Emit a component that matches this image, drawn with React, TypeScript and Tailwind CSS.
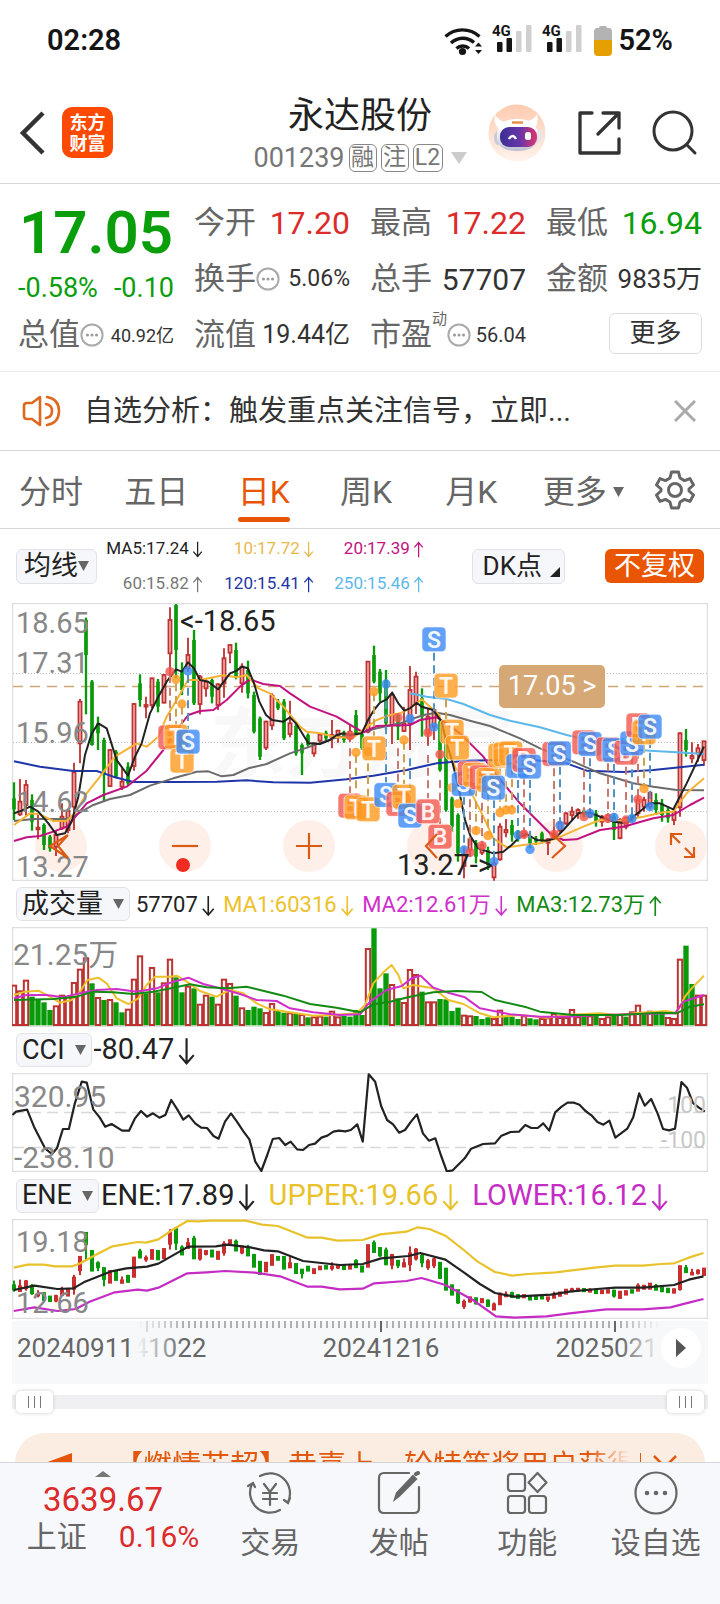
import React from "react";

type Candle = [dir: 0 | 1, high: number, top: number, bottom: number, low: number];

// 1 = rising, 0 = falling; values are chart units, three per pixel
const candles: Candle[] = [
  [0, 547, 595, 628, 660], [1, 537, 605, 643, 648], [1, 540, 555, 615, 650], [0, 583, 600, 665, 692], [1, 645, 683, 688, 718],
  [0, 670, 675, 735, 750], [0, 705, 710, 745, 755], [1, 690, 705, 740, 768], [1, 610, 650, 685, 690], [1, 625, 632, 690, 700],
  [1, 488, 517, 620, 690], [1, 297, 305, 430, 490], [0, 53, 60, 165, 343], [0, 240, 245, 435, 437], [0, 350, 370, 400, 450],
  [0, 413, 420, 520, 605], [1, 447, 450, 558, 560], [0, 450, 455, 530, 535], [1, 505, 545, 560, 570], [0, 487, 500, 550, 555],
  [1, 310, 312, 498, 512], [0, 223, 250, 300, 320], [1, 290, 315, 320, 355], [1, 233, 235, 315, 325], [0, 237, 245, 320, 337],
  [1, 222, 225, 308, 310], [1, 22, 60, 160, 230], [0, 12, 15, 150, 235], [0, 187, 210, 270, 285], [1, 113, 165, 205, 215],
  [0, 90, 120, 310, 315], [1, 225, 230, 312, 343], [1, 235, 245, 265, 290], [0, 235, 240, 290, 310], [1, 250, 253, 315, 330],
  [1, 145, 175, 250, 293], [1, 133, 135, 158, 190], [0, 128, 150, 230, 238], [1, 190, 200, 250, 278], [0, 182, 210, 280, 295],
  [0, 275, 285, 395, 400], [0, 350, 355, 470, 480], [1, 362, 365, 443, 450], [1, 280, 287, 376, 390], [0, 297, 305, 325, 330],
  [0, 297, 305, 415, 420], [1, 302, 370, 402, 412], [0, 370, 378, 460, 467], [0, 430, 435, 460, 525], [0, 400, 405, 435, 440],
  [1, 428, 430, 460, 470], [1, 400, 404, 422, 430], [0, 392, 398, 415, 425], [1, 360, 405, 410, 445], [1, 390, 392, 405, 428],
  [0, 392, 398, 420, 428], [1, 375, 395, 415, 425], [0, 330, 345, 400, 408], [0, 400, 402, 445, 450], [1, 183, 185, 395, 400],
  [0, 137, 165, 245, 250], [0, 207, 215, 280, 305], [0, 210, 240, 370, 390], [1, 275, 285, 375, 432], [0, 340, 345, 380, 420],
  [1, 320, 370, 393, 396], [1, 198, 270, 370, 450], [1, 215, 230, 310, 342], [0, 265, 295, 350, 410], [1, 325, 350, 400, 437],
  [1, 315, 330, 380, 420], [0, 360, 365, 510, 515], [0, 420, 425, 630, 635], [0, 590, 595, 680, 695], [0, 640, 645, 760, 785],
  [1, 740, 765, 798, 835], [1, 712, 718, 750, 770], [0, 720, 728, 770, 790], [1, 730, 735, 758, 765], [0, 740, 750, 795, 810],
  [1, 770, 790, 832, 842], [1, 670, 680, 778, 782], [1, 657, 690, 697, 712], [0, 660, 675, 705, 725], [0, 690, 695, 715, 725],
  [1, 690, 695, 708, 715], [0, 703, 710, 730, 745], [0, 708, 715, 725, 735], [0, 695, 700, 720, 730], [1, 715, 718, 728, 765],
  [1, 660, 700, 712, 718], [1, 665, 668, 692, 695], [1, 637, 640, 670, 674], [1, 620, 635, 645, 660], [1, 625, 630, 640, 656],
  [0, 625, 632, 645, 652], [1, 625, 640, 650, 655], [0, 630, 640, 665, 680], [1, 645, 650, 665, 680], [1, 640, 645, 660, 668],
  [0, 640, 650, 690, 720], [1, 655, 660, 714, 718], [1, 650, 655, 680, 688], [0, 640, 645, 660, 665], [1, 575, 600, 640, 650],
  [1, 590, 600, 620, 635], [1, 575, 578, 620, 628], [0, 580, 600, 630, 645], [0, 597, 610, 645, 665], [0, 622, 630, 655, 668],
  [1, 630, 635, 660, 675], [1, 397, 400, 622, 650], [0, 387, 420, 450, 470], [1, 427, 468, 475, 490], [1, 432, 445, 460, 485],
  [1, 422, 424, 480, 497],
];

const volumeTops = [
  300, 317, 285, 335, 343, 352, 375, 362, 330, 335, 292, 252, 218, 295, 337, 345, 343, 352, 382, 372, 282, 212, 325, 247, 322, 293,
  222, 277, 322, 303, 310, 357, 330, 335, 357, 282, 295, 332, 368, 375, 365, 370, 382, 355, 378, 383, 383, 385, 388, 397, 395, 393,
  395, 378, 395, 393, 395, 375, 390, 190, 130, 310, 265, 298, 340, 352, 253, 268, 320, 350, 350, 342, 343, 378, 368, 390, 392, 393,
  402, 397, 400, 375, 395, 395, 402, 392, 400, 403, 400, 398, 385, 397, 397, 373, 395, 388, 392, 390, 400, 395, 393, 388, 395, 380,
  360, 385, 378, 385, 385, 397, 400, 222, 182, 297, 330, 330,
];
const volumeDown = new Set([
  3, 4, 5, 6, 13, 15, 17, 18, 22, 24, 27, 28, 30, 33, 37, 39, 40, 41, 44, 45, 47, 49, 52, 55, 56, 57, 58, 60, 61, 62, 64, 68, 71, 72,
  73, 74, 77, 78, 79, 82, 83, 84, 86, 87, 95, 97, 100, 102, 105, 107, 108, 112, 113,
]);

const averages = [
  { color: "#1f35a8", points: "42,484 120,500 220,513 290,513 340,530 400,546 520,546 650,545 740,541 820,547 930,548 1040,538 1120,527 1220,510 1310,490 1400,482 1500,480 1600,480 1700,490 1760,512 1870,516 1960,510 2040,502 2112,494" },
  { color: "#5cb8ec", points: "1230,280 1280,290 1340,297 1390,312 1470,345 1530,362 1620,382 1700,405 1760,420 1850,445 1950,452 2030,457 2112,462" },
  { color: "#6b6b6b", points: "42,663 100,657 200,657 235,640 280,615 330,597 390,585 450,557 520,535 590,515 625,514 665,529 700,525 745,505 800,492 870,460 930,440 1000,415 1060,405 1130,385 1200,370 1270,345 1310,338 1350,345 1410,362 1470,378 1560,415 1620,445 1720,485 1800,520 1900,550 1960,560 2030,570 2112,571" },
  { color: "#c1127f", points: "42,723 80,712 120,708 160,695 200,680 235,640 260,610 310,585 380,560 440,512 490,450 530,390 565,345 600,333 640,330 680,300 720,260 750,238 790,252 840,258 870,280 930,320 1010,350 1060,380 1090,397 1130,378 1230,375 1260,360 1310,352 1340,370 1380,400 1420,440 1450,470 1470,500 1510,550 1560,610 1610,660 1650,700 1690,720 1730,718 1800,690 1870,680 1960,655 2020,645 2070,615 2112,593" },
  { color: "#f5b335", points: "42,675 90,640 120,643 160,663 200,662 225,640 260,580 300,530 345,470 410,430 440,440 475,410 500,350 530,300 564,240 600,240 670,226 710,232 740,225 775,265 810,280 850,320 900,380 920,395 960,400 1010,412 1060,413 1095,385 1130,360 1170,345 1200,340 1230,325 1265,298 1290,320 1318,345 1340,430 1365,500 1390,540 1420,590 1450,650 1480,715 1520,742 1570,735 1620,730 1670,715 1750,680 1800,660 1860,662 1930,650 1990,637 2020,635 2060,580 2112,535" },
  { color: "#222222", points: "42,640 65,632 90,620 115,635 145,670 170,705 195,700 215,665 235,590 255,465 275,400 295,370 320,385 350,480 384,527 405,470 425,430 450,340 475,290 500,245 528,208 546,215 564,187 582,205 600,240 625,245 654,268 690,220 710,212 726,200 744,205 762,250 778,305 798,345 816,360 850,365 870,352 888,370 925,430 960,432 990,420 1010,405 1030,400 1050,405 1085,400 1104,360 1122,330 1140,308 1160,298 1177,278 1195,310 1213,332 1230,325 1250,308 1265,320 1300,330 1325,365 1340,430 1358,490 1375,560 1395,660 1412,710 1435,745 1480,760 1510,755 1535,735 1560,710 1580,702 1610,720 1640,722 1665,715 1690,690 1735,640 1770,638 1800,650 1840,665 1880,670 1900,650 1950,610 1980,610 2020,628 2060,550 2112,440" },
];

const volumeAverages = [
  { color: "#ecc12c", points: "42,330 75,320 115,317 150,335 180,353 215,345 240,320 262,285 295,278 320,295 350,340 385,357 415,340 440,300 465,275 510,275 530,272 560,290 600,318 650,335 690,315 730,325 770,355 810,373 880,383 940,392 1000,390 1070,385 1095,360 1120,295 1150,262 1175,240 1195,270 1210,310 1240,300 1300,310 1345,345 1390,357 1440,385 1480,397 1560,390 1640,398 1700,390 1800,385 1850,390 1920,383 2000,378 2030,385 2055,335 2075,310 2112,272" },
  { color: "#cf30cc", points: "42,340 80,330 140,330 190,337 240,325 290,315 350,312 410,320 470,310 520,290 565,278 610,297 660,310 720,327 770,345 830,348 870,370 940,382 1020,390 1080,388 1110,350 1160,315 1205,303 1235,280 1262,272 1300,308 1350,325 1395,337 1440,370 1530,388 1620,395 1700,395 1800,390 1920,387 2025,385 2050,350 2080,340 2112,330" },
  { color: "#138a13", points: "42,345 160,342 230,335 280,320 340,322 400,327 460,320 520,308 570,298 620,307 680,310 740,305 780,315 850,332 930,357 1010,368 1080,382 1120,358 1170,350 1230,335 1300,322 1370,318 1445,321 1485,345 1580,367 1620,380 1720,390 1860,390 1980,383 2030,385 2070,365 2112,358" },
];

const cciPoints =
  "27,255 35,245 59,239 74,290 98,355 113,372 124,355 137,297 150,297 163,220 178,155 189,158 203,238 217,262 229,290 243,282 266,302 281,302 294,265 307,243 320,260 333,250 347,263 360,255 373,210 386,238 399,269 411,256 425,280 438,293 451,294 465,318 476,326 490,275 503,250 516,275 530,304 543,328 556,395 569,423 582,375 594,327 608,324 621,345 633,335 647,358 660,360 673,345 686,341 700,323 713,317 726,305 738,302 752,304 764,300 778,283 790,335 803,133 817,155 830,228 843,270 856,283 869,308 882,300 895,275 908,253 921,310 934,332 948,325 960,375 973,424 986,421 1012,385 1026,356 1052,342 1078,340 1092,317 1112,306 1130,305 1144,285 1157,294 1171,294 1183,280 1196,302 1209,247 1223,230 1236,218 1250,218 1262,224 1275,243 1288,256 1301,276 1314,284 1327,272 1340,323 1366,296 1379,262 1392,190 1404,227 1418,207 1432,250 1444,297 1457,301 1470,296 1484,156 1496,173 1509,219 1522,233 1535,245";

const eneLines = [
  { color: "#e8c22a", points: "30,278 60,269 95,269 120,274 158,274 175,265 215,235 245,214 300,201 318,203 345,193 375,165 408,138 430,139 460,137 535,137 570,149 605,153 670,188 700,188 735,197 790,195 828,178 885,170 910,157 935,162 970,182 1010,225 1040,260 1078,291 1115,302 1150,297 1210,292 1300,277 1340,272 1400,272 1440,267 1468,265 1500,248 1532,234" },
  { color: "#222222", points: "30,345 75,332 125,342 160,340 185,320 240,290 275,280 320,275 345,266 410,215 470,214 495,209 545,217 575,226 605,229 660,258 700,264 740,270 790,267 830,250 890,243 915,234 970,254 1010,292 1045,327 1078,354 1120,365 1200,359 1240,350 1300,342 1340,338 1400,338 1468,330 1500,314 1532,304" },
  { color: "#c52cc5", points: "30,408 75,397 125,408 165,402 195,380 250,352 300,344 320,347 345,338 408,295 450,292 490,288 555,293 610,304 670,335 700,335 740,343 790,341 815,325 885,318 918,309 970,330 1030,375 1080,424 1120,428 1190,424 1240,415 1320,403 1400,403 1460,397 1500,383 1532,372" },
];

type Badge = ["B" | "T" | "S", number, number];
const badges: Badge[] = [
  ["B", 510, 412], ["T", 528, 410], ["T", 546, 482], ["S", 564, 425], ["S", 1302, 118], ["T", 1338, 257], ["T", 1356, 395],
  ["T", 1372, 443], ["T", 1122, 445], ["B", 1050, 617], ["T", 1068, 622], ["T", 1104, 628], ["S", 1158, 585], ["B", 1194, 612],
  ["T", 1212, 590], ["S", 1230, 647], ["B", 1284, 634], ["B", 1320, 710], ["S", 1390, 552], ["B", 1408, 520], ["T", 1424, 525],
  ["B", 1444, 532], ["T", 1464, 540], ["S", 1480, 563], ["T", 1500, 467], ["T", 1515, 463], ["T", 1532, 460], ["S", 1554, 498],
  ["B", 1572, 480], ["S", 1588, 500], ["B", 1662, 462], ["S", 1678, 460], ["B", 1752, 427], ["S", 1770, 432], ["B", 1824, 448],
  ["S", 1842, 450], ["B", 1878, 458], ["S", 1896, 430], ["B", 1914, 376], ["T", 1932, 397], ["S", 1950, 380],
];
const badgeFill = { B: "#f4584e", T: "#ff9a1f", S: "#3b8af5" };
const stemColor = { B: "#c97970", T: "#cda24e", S: "#5592c4" };

type Stem = ["B" | "T" | "S", number, number, number];
const stems: Stem[] = [
  ["B", 510, 225, 378], ["T", 528, 250, 376], ["T", 546, 320, 376], ["S", 564, 225, 388], ["S", 1302, 158, 340], ["T", 1338, 298, 360],
  ["B", 1050, 445, 580], ["T", 1068, 465, 586], ["T", 1104, 490, 590], ["S", 1158, 265, 548], ["B", 1194, 445, 575],
  ["T", 1212, 425, 552], ["T", 1122, 280, 408], ["S", 1230, 475, 610], ["B", 1284, 465, 595], ["B", 1320, 540, 672],
  ["S", 1392, 590, 745], ["B", 1410, 560, 745], ["T", 1428, 565, 690], ["B", 1446, 570, 730], ["T", 1464, 580, 705],
  ["S", 1482, 600, 780], ["T", 1500, 505, 630], ["T", 1518, 505, 625], ["T", 1536, 500, 625], ["S", 1554, 540, 690],
  ["B", 1572, 530, 700], ["S", 1590, 540, 735], ["B", 1662, 505, 690], ["S", 1680, 500, 665], ["B", 1752, 470, 640],
  ["S", 1770, 475, 630], ["B", 1824, 490, 645], ["S", 1842, 492, 640], ["B", 1878, 500, 650], ["S", 1896, 470, 645],
  ["B", 1914, 415, 590], ["T", 1932, 435, 560], ["S", 1950, 420, 610],
];
const dots: Badge[] = [
  ["B", 510, 215], ["T", 528, 238], ["T", 546, 312], ["S", 564, 213], ["B", 1050, 407], ["T", 1068, 457],
  ["T", 1104, 455], ["T", 1122, 275], ["S", 1158, 252], ["B", 1194, 353], ["T", 1212, 420], ["S", 1230, 356],
  ["B", 1284, 398], ["S", 1302, 381], ["B", 1320, 463], ["T", 1356, 563], ["T", 1374, 611], ["S", 1392, 750],
  ["B", 1410, 757], ["T", 1428, 692], ["B", 1446, 737], ["T", 1464, 707], ["S", 1482, 785], ["T", 1500, 638],
  ["T", 1518, 630], ["T", 1535, 630], ["S", 1554, 705], ["B", 1572, 703], ["S", 1590, 748], ["B", 1662, 703],
  ["S", 1680, 676], ["B", 1752, 650], ["S", 1770, 640], ["B", 1824, 655], ["S", 1842, 652], ["B", 1878, 660],
  ["S", 1896, 656], ["B", 1914, 598], ["T", 1932, 566], ["S", 1950, 620],
];

const UP = "#bf3232";
const DOWN = "#0b9a0b";
const font = "font-[Roboto,'Noto_Sans_CJK_SC',sans-serif]";

function Arrow({ up = false }: { up?: boolean }) {
  return (
    <svg viewBox="0 0 16 24" className="ml-[3px] inline-block h-[1em] w-[0.66em]" fill="none" stroke="currentColor" strokeWidth="1.8">
      {up ? <path d="M8 23V2M2 9l6-7 6 7" /> : <path d="M8 1v21M2 15l6 7 6-7" />}
    </svg>
  );
}

function Info() {
  return (
    <svg viewBox="0 0 24 24" className="size-6 shrink-0" fill="none" stroke="#aaa" strokeWidth="2">
      <circle cx="12" cy="12" r="10.6" />
      <g fill="#999" stroke="none">
        <circle cx="7.5" cy="12" r="1.5" />
        <circle cx="12" cy="12" r="1.5" />
        <circle cx="16.5" cy="12" r="1.5" />
      </g>
    </svg>
  );
}

function Caret() {
  return (
    <svg viewBox="0 0 10 9" className="h-[10px] w-[11px] shrink-0" fill="#666">
      <path d="M0 0h10L5 9z" />
    </svg>
  );
}

function Signal() {
  return (
    <svg viewBox="0 0 40 40" className="size-10">
      <text x="0" y="15" fontSize="15" fontWeight="700" fill="#151515">4G</text>
      <g fill="#151515">
        <rect x="5" y="21" width="5.5" height="10" rx="1" />
        <rect x="14.5" y="17" width="5.5" height="14" rx="1" />
      </g>
      <g fill="#d0d0d0">
        <rect x="24" y="10" width="5.5" height="21" rx="1" />
        <rect x="34" y="4" width="5.5" height="27" rx="1" />
      </g>
    </svg>
  );
}

function StatusBar() {
  return (
    <div className="flex h-20 items-center justify-between pt-0.5 pr-[47px] pl-[47px]">
      <span className="text-[29px] font-semibold text-[#151515]">02:28</span>
      <div className="flex items-center">
        <svg viewBox="0 0 40 30" className="mr-2 h-[30px] w-10" fill="none" stroke="#151515" strokeWidth="3.4">
          <path d="M1.500 10.500a25 25 0 0 1 34 0M7 17a17 17 0 0 1 23-.5M12.500 22.500a9 9 0 0 1 12.500 0" />
          <circle cx="18.500" cy="25.500" r="3.600" fill="#151515" stroke="none" />
          <path d="M31 20.500l3.500-4 3.500 4zM31 24l3.500 4 3.500-4z" fill="#151515" stroke="none" />
        </svg>
        <Signal />
        <div className="w-2.5" />
        <Signal />
        <svg viewBox="0 0 18 30" className="ml-3 h-[30px] w-[18px]">
          <path d="M5 2q0-2 2-2h4q2 0 2 2h2q3 0 3 4v8H0V6q0-4 3-4z" fill="#b3b3b3" />
          <path d="M0 14h18v12q0 4-4 4H4q-4 0-4-4z" fill="#e5a000" />
        </svg>
        <span className="ml-1.5 text-[29px] font-semibold text-[#151515]">52%</span>
      </div>
    </div>
  );
}

function Header() {
  return (
    <header className="grid h-[104px] grid-cols-[1fr_auto_1fr] items-center border-b border-[#d6d6d6] px-[18px]">
      <div className="flex items-center gap-4 pt-0.5">
        <button aria-label="返回">
          <svg viewBox="0 0 28 44" className="h-11 w-7" fill="none" stroke="#333" strokeWidth="4.5">
            <path d="M25 2L5 22l20 20" />
          </svg>
        </button>
        <span className="flex size-[51px] flex-col items-center justify-center rounded-[10px] bg-[#fd4a03] text-[18px] leading-[21px] font-bold text-white">
          <span>东方</span>
          <span>财富</span>
        </span>
      </div>
      <div className="pt-2 text-center">
        <h1 className="text-[36px] leading-[44px] text-[#222]">永达股份</h1>
        <div className="flex items-center text-[27px] leading-[40px] text-[#777]">
          <span>001239</span>
          <span className="ml-1 flex size-7 items-center justify-center rounded-md border border-[#888] text-[23px] leading-none">融</span>
          <span className="ml-1 flex size-7 items-center justify-center rounded-md border border-[#888] text-[23px] leading-none">注</span>
          <span className="ml-1 flex h-7 w-[30px] items-center justify-center rounded-md border border-[#888] text-[23px] leading-none">L2</span>
          <svg viewBox="0 0 16 12" className="ml-2 h-3 w-4" fill="#ccc"><path d="M0 0h16L8 12z" /></svg>
        </div>
      </div>
      <div className="flex items-center justify-end gap-[31px] pt-0.5 pr-1 pl-5">
        <button aria-label="智能助手">
          <svg viewBox="0 0 58 58" className="size-[58px]">
            <defs>
              <linearGradient id="halo" x2="0" y2="1"><stop stopColor="#fdcbb0" /><stop offset="1" stopColor="#fff3ec" /></linearGradient>
              <linearGradient id="visor"><stop stopColor="#3a2f95" /><stop offset=".55" stopColor="#6a35a8" /><stop offset="1" stopColor="#e0356b" /></linearGradient>
              <linearGradient id="shell" x2="0" y2="1"><stop offset=".3" stopColor="#fff" /><stop offset="1" stopColor="#bdbdcf" /></linearGradient>
            </defs>
            <circle cx="29" cy="29" r="28.500" fill="url(#halo)" />
            <path d="M7 11q-2 9 4 14l7-7q-7-1-11-7zM49 10q2 8-2 14l-8-7q7-1 10-7z" fill="#fff" />
            <ellipse cx="10" cy="34" rx="4" ry="7" fill="#c9c9d8" />
            <ellipse cx="50" cy="32" rx="4" ry="7" fill="#e5e5ee" />
            <path d="M9 32q0-17 20-17t21 16q0 16-21 16T9 32z" fill="url(#shell)" />
            <rect x="12" y="23" width="37" height="20" rx="9" fill="url(#visor)" />
            <path d="M21 35q3.500-6 7 0" fill="none" stroke="#fff" strokeWidth="2.400" />
            <rect x="37" y="28" width="6" height="8" rx="2.500" fill="#fff" />
            <path d="M24 18.500h11" stroke="#e8924a" strokeWidth="2.500" />
          </svg>
        </button>
        <button aria-label="分享">
          <svg viewBox="0 0 44 44" className="size-11" fill="none" stroke="#333" strokeWidth="3.300" strokeLinecap="round" strokeLinejoin="round">
            <path d="M15 2H3v40h39V28M26 2h16v15M42 2L21 23" />
          </svg>
        </button>
        <button aria-label="搜索">
          <svg viewBox="0 0 46 46" className="size-[46px]" fill="none" stroke="#333" strokeWidth="3" strokeLinecap="round">
            <circle cx="21" cy="21" r="19" />
            <path d="M35 35l8 8" />
          </svg>
        </button>
      </div>
    </header>
  );
}

function Cell({ label, info, sup, children }: { label: string; info?: boolean; sup?: string; children: React.ReactNode }) {
  return (
    <div className="flex items-center justify-between whitespace-nowrap">
      <span className="flex items-center text-[31px] text-[#666]">
        {label}
        {sup && <span className="self-start text-[15px] leading-none">{sup}</span>}
        {info && <Info />}
      </span>
      {children}
    </div>
  );
}

function Quote() {
  return (
    <section className="grid auto-rows-[56px] grid-cols-4 gap-x-5 border-b border-[#ececec] px-[18px] pt-[11px] pb-2 text-[#333]">
      <div className="row-span-2 text-[#0b9e0b]">
        <div className="pt-1.5 text-center text-[60px] leading-[64px] font-semibold">17.05</div>
        <div className="flex justify-between text-[27px] leading-[46px]">
          <span>-0.58%</span>
          <span>-0.10</span>
        </div>
      </div>
      <Cell label="今开"><span className="text-[32px]">{<span className="text-[#dc2b2b]">17.20</span>}</span></Cell>
      <Cell label="最高"><span className="text-[32px] text-[#dc2b2b]">17.22</span></Cell>
      <Cell label="最低"><span className="text-[32px] text-[#0b9e0b]">16.94</span></Cell>
      <Cell label="换手" info><span className="text-[23px]">5.06%</span></Cell>
      <Cell label="总手"><span className="text-[30px]">57707</span></Cell>
      <Cell label="金额"><span className="text-[26px]">9835万</span></Cell>
      <Cell label="总值" info><span className="text-[18px]">40.92亿</span></Cell>
      <Cell label="流值"><span className="text-[25px]">19.44亿</span></Cell>
      <Cell label="市盈" sup="动" info><span className="text-[20px]">56.04</span></Cell>
      <button className="mb-1 h-[41px] w-[93px] self-center justify-self-end rounded-md border border-[#ddd] text-[26px] leading-none">更多</button>
    </section>
  );
}

function Notice() {
  return (
    <div className="flex h-[79px] items-center border-b border-[#d6d6d6] pr-6 pl-[22px]">
      <svg viewBox="0 0 40 34" className="h-[34px] w-10 shrink-0" fill="none" stroke="#df6820" strokeWidth="2.600" strokeLinecap="round" strokeLinejoin="round">
        <path d="M18 3v28l-8-6H5q-3 0-3-3V12q0-3 3-3h5z" />
        <path d="M24 10q6 1 6 7t-6 7M25 3q12 2 12 14T25 31" />
      </svg>
      <p className="ml-[22px] grow truncate pt-0.5 text-[29px] text-[#333]">自选分析：触发重点关注信号，立即...</p>
      <button aria-label="关闭">
        <svg viewBox="0 0 22 22" className="size-[22px]" stroke="#aaa" strokeWidth="3"><path d="M1 1l20 20M21 1L1 21" /></svg>
      </button>
    </div>
  );
}

function Tabs() {
  const tab = "h-full pt-1 text-left";
  return (
    <nav className="grid h-[78px] grid-cols-[105fr_113fr_102fr_105fr_97fr_112fr_auto] items-center border-b border-[#d6d6d6] pr-[25px] pl-[19px] text-[32px] text-[#666]">
      <button className={tab}>分时</button>
      <button className={tab}>五日</button>
      <button className="relative h-full justify-self-start pt-1 text-[#e85505]">
        日K
        <span className="absolute inset-x-0 bottom-1.5 h-[5px] rounded-full bg-[#e85505]" />
      </button>
      <button className={tab}>周K</button>
      <button className={tab}>月K</button>
      <button className="flex h-full items-center gap-1.5 pt-1">更多<Caret /></button>
      <button aria-label="设置">
        <svg viewBox="0 0 40 40" className="size-10" fill="none" stroke="#666" strokeWidth="3" strokeLinejoin="round">
          <path d="M16.500 2h7l1.500 6 4.500 2.600 5.500-2L38.500 15 34 19v2l4.500 4-3.500 6.400-5.500-2L25 32l-1.500 6h-7L15 32l-4.500-2.600-5.500 2L1.500 25 6 21v-2l-4.500-4L5 8.600l5.500 2L15 8z" />
          <circle cx="20" cy="20" r="6.500" />
        </svg>
      </button>
    </nav>
  );
}

function AverageBar() {
  return (
    <div className="flex h-[74px] items-center px-4">
      <button className="flex h-[35px] items-center rounded-md border border-[#e0e2e6] bg-[#f6f7fa] px-[7px] text-[27px] leading-none text-[#222]">均线<Caret /></button>
      <div className="ml-1.5 grid grid-cols-[100px_111px_110px] text-right text-[17px] leading-[35px]">
        <span className="whitespace-nowrap text-[#222]">MA5:17.24<Arrow /></span>
        <span className="text-[#e9b84c]">10:17.72<Arrow /></span>
        <span className="text-[#c1127f]">20:17.39<Arrow up /></span>
        <span className="text-[#777]">60:15.82<Arrow up /></span>
        <span className="text-[#1f35a8]">120:15.41<Arrow up /></span>
        <span className="text-[#5cb8ec]">250:15.46<Arrow up /></span>
      </div>
      <button className="ml-auto flex h-[35px] items-center gap-2 rounded-md border border-[#e0e2e6] bg-[#f6f7fa] pr-1 pl-2.5 text-[26px] leading-none text-[#222]">
        DK点
        <svg viewBox="0 0 10 10" className="mt-3 size-2.5" fill="#222"><path d="M10 0v10H0z" /></svg>
      </button>
      <button className="ml-10 h-[34px] rounded-md bg-[#ea5504] px-[9px] text-[27px] leading-none text-white">不复权</button>
    </div>
  );
}

function Control({ label, children }: { label: string; children: React.ReactNode }) {
  return (
    <button aria-label={label} className="size-[52px] rounded-full">
      <svg viewBox="0 0 52 52" className="size-full" fill="none" stroke="#dd5a14" strokeWidth="2.200">{children}</svg>
    </button>
  );
}

function KChart() {
  return (
    <div className="relative">
      <svg viewBox="12 603 696 278" className="block w-full">
        <text x="210" y="771" fontSize="76" fontWeight="700" fill="#f8f8f8">东方财富</text>
        <rect x="12.500" y="603.500" width="695" height="277" fill="none" stroke="#dfdfdf" strokeWidth="1.500" />
        <g fill="#fef0e9">
          {[61, 185, 309, 433, 557, 681].map((x) => (
            <circle key={x} cx={x} cy="846" r="26" />
          ))}
        </g>
        <g stroke="#bbb" strokeDasharray="1 2">
          <path d="M13 673.500h694M13 742.500h694M13 811.500h694" />
        </g>
        <path d="M13 686.500h694" stroke="#cfa876" strokeWidth="1.300" strokeDasharray="10 7" />
        <g transform="translate(0 600) scale(.33333)">
          {candles.map(([up, high, top, bottom, low], i) => {
            const x = 42 + i * 18;
            return up ? (
              <g key={i} stroke={UP} strokeWidth="5.500" fill="#f6dcd8">
                <path d={`M${x} ${high}V${low}`} />
                <rect x={x - 4.5} y={top} width="9" height={bottom - top} />
              </g>
            ) : (
              <g key={i} fill={DOWN}>
                <rect x={x - 3.5} y={high} width="7" height={low - high} />
                <rect x={x - 5.5} y={top} width="11" height={bottom - top} />
              </g>
            );
          })}
          {averages.map((line) => (
            <polyline key={line.color} points={line.points} fill="none" stroke={line.color} strokeWidth="6" strokeLinejoin="round" />
          ))}
        </g>
        <g fontSize="29" fill="#888">
          <text x="16" y="633">18.65</text>
          <text x="16" y="673">17.31</text>
          <text x="16" y="743">15.96</text>
          <text x="16" y="812">14.62</text>
          <text x="16" y="877">13.27</text>
        </g>
        <g transform="translate(0 600) scale(.33333)">
          {stems.map(([kind, x, from, to]) => (
            <path key={`${kind}${x}`} d={`M${x} ${from}V${to}`} stroke={stemColor[kind]} strokeWidth="6" strokeDasharray="24 14" />
          ))}
          {dots.map(([kind, x, y]) => (
            <circle key={`${kind}${x}`} cx={x} cy={y} r="14" fill={badgeFill[kind]} fillOpacity=".82" />
          ))}
          {badges.map(([kind, x, y]) => (
            <g key={`${kind}${x}`}>
              <rect x={x - 36} y={y - 37} width="72" height="74" rx="13" fill={badgeFill[kind]} fillOpacity=".8" stroke="#fff" strokeOpacity=".6" strokeWidth="3" />
              <text x={x} y={y + 25} fontSize="69" fontWeight="600" textAnchor="middle" fill="#fff" fillOpacity=".92">{kind}</text>
            </g>
          ))}
        </g>
        <g fontSize="29" fill="#222">
          <text x="180" y="631">&lt;-18.65</text>
          <text x="397" y="875">13.27-&gt;</text>
        </g>
      </svg>
      <div className="absolute inset-x-0 bottom-[9px] flex justify-between pl-[23px]">
        <Control label="向左"><path d="M33 15L15 26l18 12M33 15L23 26l10 12" /></Control>
        <Control label="缩小"><path d="M13 26h26" /><circle cx="24" cy="45" r="7" fill="#f02b22" stroke="none" /></Control>
        <Control label="放大"><path d="M13 26h26M26 13v26" /></Control>
        <Control label="上一段"><path d="M29 14L18 26l11 12" /></Control>
        <Control label="下一段"><path d="M20 14l13 12-13 12" /></Control>
        <Control label="全屏"><path d="M15 25V14h11M15 14l9 9M28 37h10V27M38 37l-9-9" /></Control>
      </div>
      <button className="absolute top-[62px] left-[70%] h-[43px] w-[106px] rounded-[5px] bg-[#d5a876] text-[27px] leading-none text-white">17.05 &gt;</button>
    </div>
  );
}

function Picker({ label }: { label: string }) {
  return (
    <button className="flex h-[34px] items-center gap-2.5 rounded-md border border-[#e0e2e6] bg-[#f6f7fa] px-[5px] text-[27px] leading-none whitespace-nowrap text-[#222]">
      {label}
      <Caret />
    </button>
  );
}

function VolumeChart() {
  return (
    <svg viewBox="12 927 696 100" className="block w-full">
      <rect x="12.500" y="927.500" width="695" height="99" fill="none" stroke="#dfdfdf" strokeWidth="1.500" />
      <g transform="translate(0 885) scale(.33333)">
        {volumeTops.map((top, i) => {
          const x = 42 + i * 18;
          return volumeDown.has(i) ? (
            <rect key={i} x={x - 8} y={top} width="16" height={421 - top} fill="#089a08" />
          ) : (
            <rect key={i} x={x - 6.5} y={top + 2} width="13" height={418 - top} fill="#fff" stroke={UP} strokeWidth="6" />
          );
        })}
        {volumeAverages.map((line) => (
          <polyline key={line.color} points={line.points} fill="none" stroke={line.color} strokeWidth="6" strokeLinejoin="round" />
        ))}
      </g>
      <text x="13" y="965" fontSize="30" fill="#888">21.25万</text>
    </svg>
  );
}

function CciChart() {
  return (
    <svg viewBox="12 1073 696 99" className="block w-full">
      <rect x="12.500" y="1073.500" width="695" height="98" fill="none" stroke="#dfdfdf" strokeWidth="1.500" />
      <path d="M13 1112.500h694M13 1147.500h694" stroke="#d8d8d8" strokeWidth="1.300" strokeDasharray="11 6" />
      <polyline transform="translate(0 1030) scale(.4592 .33333)" points={cciPoints} fill="none" stroke="#222" strokeWidth="2.200" strokeLinejoin="round" vectorEffect="non-scaling-stroke" />
      <g fontSize="30" fill="#888">
        <text x="14" y="1107">320.95</text>
        <text x="14" y="1168">-238.10</text>
      </g>
      <g fontSize="23" fill="#c8c8c8" textAnchor="end">
        <text x="706" y="1113">100</text>
        <text x="706" y="1148">-100</text>
      </g>
    </svg>
  );
}

function EneChart() {
  return (
    <svg viewBox="12 1219 696 100" className="block w-full">
      <rect x="12.500" y="1219.500" width="695" height="99" fill="none" stroke="#dfdfdf" strokeWidth="1.500" />
      <g transform="translate(0 1227) scale(.33333 .098)">
        {candles.map(([up, high, top, bottom, low], i) => {
          const x = 42 + i * 18;
          return (
            <g key={i} fill={up ? "#c92f2f" : DOWN}>
              <rect x={x - 3} y={high} width="6" height={low - high} />
              <rect x={x - 6} y={top - 10} width="12" height={bottom - top + 30} />
            </g>
          );
        })}
      </g>
      {eneLines.map((line) => (
        <polyline key={line.color} transform="translate(0 1175) scale(.4592 .33333)" points={line.points} fill="none" stroke={line.color} strokeWidth="2.200" strokeLinejoin="round" vectorEffect="non-scaling-stroke" />
      ))}
      <g fontSize="29" fill="#888">
        <text x="16" y="1252">19.18</text>
        <text x="16" y="1313">12.66</text>
      </g>
    </svg>
  );
}

function TimeAxis() {
  const ticks = Array.from({ length: 88 }, (_, i) => 141 + i * 6).filter((x) => x < 660);
  return (
    <div className="relative mt-0.5 bg-[#f7f8fa]">
      <svg viewBox="12 1321 696 63" className="block w-full">
        <defs>
          <linearGradient id="fadeIn"><stop stopColor="#f7f8fa" /><stop offset="1" stopColor="#f7f8fa" stopOpacity="0" /></linearGradient>
          <linearGradient id="fadeOut"><stop stopColor="#f7f8fa" stopOpacity="0" /><stop offset="1" stopColor="#f7f8fa" /></linearGradient>
        </defs>
        {ticks.map((x) => {
          const major = (x - 147) % 234 === 0;
          return <path key={x} d={`M${x} 1321v${major ? 11 : 7}`} stroke={major ? "#666" : "#999"} strokeWidth={major ? 2 : 1.5} />;
        })}
        <g fontSize="26" fill="#666">
          <text x="148" y="1357" textAnchor="middle">20241022</text>
          <text x="381" y="1357" textAnchor="middle">20241216</text>
          <text x="614" y="1357" textAnchor="middle">20250218</text>
        </g>
        <rect x="12" y="1321" width="125" height="60" fill="#f7f8fa" />
        <rect x="137" y="1321" width="46" height="60" fill="url(#fadeIn)" />
        <rect x="620" y="1321" width="40" height="60" fill="url(#fadeOut)" />
        <rect x="658" y="1321" width="50" height="60" fill="#f7f8fa" />
        <text x="17" y="1357" fontSize="26" fill="#666">20240911</text>
      </svg>
      <button aria-label="播放" className="absolute top-[7px] right-[7px] flex size-10 items-center justify-center rounded-full bg-white">
        <svg viewBox="0 0 10 18" className="h-[18px] w-2.5" fill="#555"><path d="M0 0l10 9-10 9z" /></svg>
      </button>
    </div>
  );
}

const thumb =
  "h-[22px] w-1/2 appearance-none bg-transparent [&::-webkit-slider-thumb]:h-[22px] [&::-webkit-slider-thumb]:w-[37px] [&::-webkit-slider-thumb]:appearance-none [&::-webkit-slider-thumb]:rounded-[5px] [&::-webkit-slider-thumb]:bg-[linear-gradient(90deg,#fff_12px,#777_12px,#777_13px,#fff_13px,#fff_18px,#777_18px,#777_19px,#fff_19px,#fff_24px,#777_24px,#777_25px,#fff_25px)] [&::-webkit-slider-thumb]:bg-[length:100%_12px] [&::-webkit-slider-thumb]:bg-center [&::-webkit-slider-thumb]:bg-no-repeat [&::-webkit-slider-thumb]:bg-white [&::-webkit-slider-thumb]:shadow-[0_0_4px_#ccc]";

function RangeBar() {
  return (
    <div className="mt-[7px] flex bg-[linear-gradient(#f0f0f3,#f0f0f3)] bg-[length:100%_14px] bg-center bg-no-repeat px-1">
      <input type="range" aria-label="起始日期" defaultValue={0} className={thumb} />
      <input type="range" aria-label="结束日期" defaultValue={100} className={thumb} />
    </div>
  );
}

function Banner() {
  return (
    <div className="mt-5 h-[29px] overflow-hidden px-[3px]">
      <div className="flex h-[68px] items-center rounded-[30px] bg-[#fcede3] pr-7 pl-[30px] text-[29px] whitespace-nowrap text-[#e0590f]">
        <svg viewBox="0 0 28 28" className="size-7 shrink-0" fill="#e65507"><path d="M0 10L27 0v28L0 18z" /></svg>
        <span className="ml-[41px] w-[516px] overflow-hidden [mask-image:linear-gradient(90deg,#000_92%,transparent)]">【燃情苏超】恭喜上一轮特等奖用户获得</span>
        <span className="ml-2.5 h-7 w-px bg-[#e0590f]" />
        <button aria-label="关闭广告" className="ml-3">
          <svg viewBox="0 0 24 24" className="size-6" stroke="#e0590f" strokeWidth="2.500"><path d="M1 1l22 22M23 1L1 23" /></svg>
        </button>
      </div>
    </div>
  );
}

function NavItem({ label, children }: { label: string; children: React.ReactNode }) {
  return (
    <a href="#" className="flex flex-col items-center">
      <svg viewBox="0 0 48 44" className="h-11 w-12" fill="none" stroke="#666" strokeWidth="2.200" strokeLinecap="round">{children}</svg>
      <span className="mt-1.5 text-[30px] leading-[44px]">{label}</span>
    </a>
  );
}

function BottomNav() {
  return (
    <nav className="grid h-[142px] grow grid-cols-[206px_1fr_1fr_1fr_1fr] border-t border-[#d4d5d8] bg-[#f7f8fb] pt-2 text-[#666]">
      <a href="#" className="flex flex-col items-center">
        <svg viewBox="0 0 16 6" className="h-1.5 w-4" fill="#777"><path d="M8 0l8 6H0z" /></svg>
        <span className="mt-1.5 text-[33px] leading-[34px] text-[#dc2b2b]">3639.67</span>
        <span className="mt-0.5 flex gap-8 pl-5 text-[30px] leading-[36px] whitespace-nowrap">
          上证<span className="text-[#dc2b2b]">0.16%</span>
        </span>
      </a>
      <NavItem label="交易">
        <path d="M14 5a20 20 0 0 1 28 26M44 27l-2 5-4-3M34 39A20 20 0 0 1 6 13M2 15l5-3 2 4" />
        <path d="M18 13l6 8 6-8M24 21v13M17 22h14M17 28h14" />
      </NavItem>
      <NavItem label="发帖">
        <path d="M34 2H9q-5 0-5 5v30q0 5 5 5h30q5 0 5-5V16" />
        <path d="M20 28l2-6L38 5l3 3-17 17z" fill="#666" />
        <path d="M41 3l2-1" strokeWidth="4" />
      </NavItem>
      <NavItem label="功能">
        <rect x="5" y="3" width="17" height="17" rx="3" />
        <path d="M34.500 2l9 9.500-9 9.500-9-9.500z" strokeLinejoin="round" />
        <rect x="5" y="25" width="17" height="17" rx="3" />
        <rect x="26" y="25" width="17" height="17" rx="3" />
      </NavItem>
      <NavItem label="设自选">
        <circle cx="24" cy="22" r="20.500" />
        <g fill="#666" stroke="none"><circle cx="15" cy="22" r="2.300" /><circle cx="24" cy="22" r="2.300" /><circle cx="33" cy="22" r="2.300" /></g>
      </NavItem>
    </nav>
  );
}

export default function App() {
  return (
    <div className={`flex min-h-screen flex-col bg-white ${font}`}>
      <StatusBar />
      <Header />
      <Quote />
      <Notice />
      <Tabs />
      <AverageBar />
      <main className="px-3">
        <KChart />
        <div className="flex h-[46px] items-center pl-1 text-[22px] whitespace-nowrap">
          <Picker label="成交量" />
          <span className="ml-1.5 text-[#222]">57707<Arrow /></span>
          <span className="ml-2 text-[#ecc12c]">MA1:60316<Arrow /></span>
          <span className="ml-2 text-[#cf30cc]">MA2:12.61万<Arrow /></span>
          <span className="ml-2 text-[#138a13]">MA3:12.73万<Arrow up /></span>
        </div>
        <VolumeChart />
        <div className="flex h-[46px] items-center pl-1 text-[29px] text-[#222]">
          <Picker label="CCI" />
          <span className="ml-0.5">-80.47<Arrow /></span>
        </div>
        <CciChart />
        <div className="flex h-[47px] items-center pl-1 text-[29px] whitespace-nowrap">
          <Picker label="ENE" />
          <span className="ml-0.5 text-[#222]">ENE:17.89<Arrow /></span>
          <span className="ml-3 text-[#e8c22a]">UPPER:19.66<Arrow /></span>
          <span className="ml-3 text-[#c52cc5]">LOWER:16.12<Arrow /></span>
        </div>
        <EneChart />
        <TimeAxis />
        <RangeBar />
        <Banner />
      </main>
      <BottomNav />
    </div>
  );
}
